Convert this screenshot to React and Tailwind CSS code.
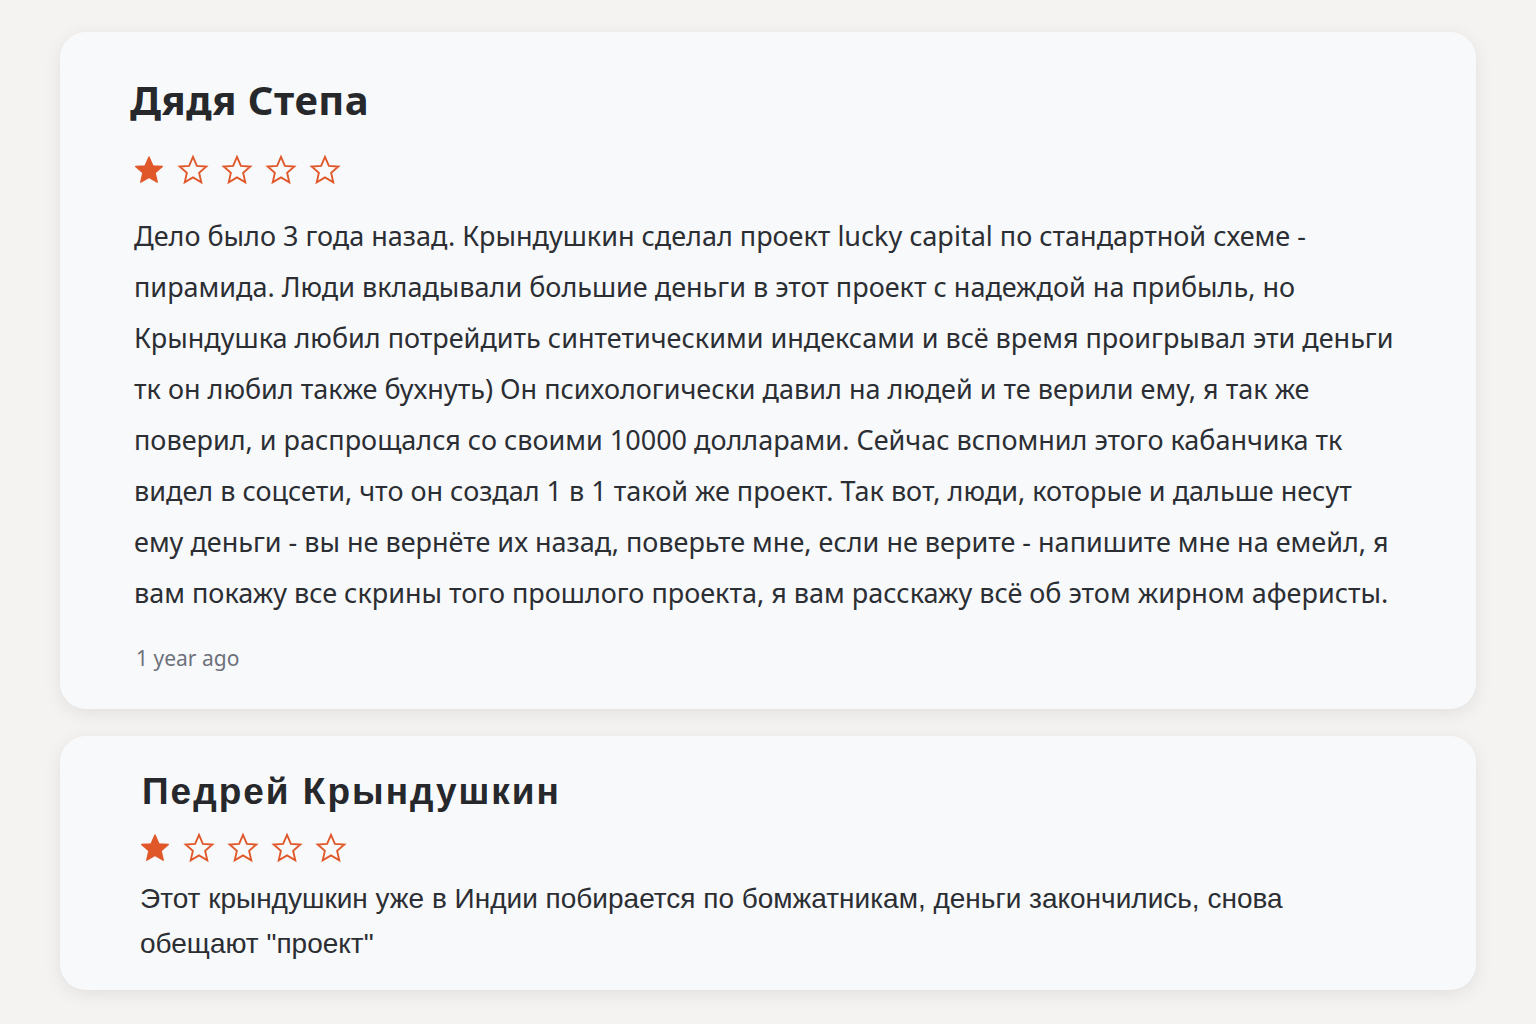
import React from "react";

function Star({ filled, size = 32 }) {
  const pts = "12,2.2 14.9,8.9 22,9.4 16.6,14.1 18.2,21.2 12,17.5 5.8,21.2 7.4,14.1 2,9.4 9.1,8.9";
  return (
    <svg width={size} height={size} viewBox="0 0 24 24" className="shrink-0">
      {filled ? (
        <polygon points={pts} fill="#e0582a" stroke="#e0582a" strokeWidth="1" strokeLinejoin="round" />
      ) : (
        <polygon points={pts} fill="none" stroke="#e0582a" strokeWidth="1.4" strokeLinejoin="miter" />
      )}
    </svg>
  );
}

function Stars({ value }) {
  return (
    <div className="flex items-center gap-[12px]">
      {[1, 2, 3, 4, 5].map((i) => (
        <Star key={i} filled={i <= value} />
      ))}
    </div>
  );
}

export default function App() {
  return (
    <div className="min-h-[1024px] w-full bg-[#f4f3f2] px-[60px] pt-[32px] pb-[36px] flex flex-col gap-[27px]">
      <article className="rounded-[26px] bg-[#f8f9fb] shadow-[0_4px_18px_rgba(0,0,0,0.08)] pl-[70px] pr-[50px] pt-[44px] pb-[36px]">
        <h2 className="font-['Noto_Sans',sans-serif] font-bold text-[40px] leading-[48px] tracking-[0.5px] text-[#26282c]">
          Дядя Степа
        </h2>
        <div className="mt-[30px] ml-[3px]">
          <Stars value={1} />
        </div>
        <p className="mt-[24px] ml-[4px] font-['Noto_Sans',sans-serif] text-[27px] leading-[51px] text-[#2b2e33]">
          Дело было 3 года назад. Крындушкин сделал проект lucky capital по стандартной схеме -<br />
          пирамида. Люди вкладывали большие деньги в этот проект с надеждой на прибыль, но<br />
          Крындушка любил потрейдить синтетическими индексами и всё время проигрывал эти деньги<br />
          тк он любил также бухнуть) Он психологически давил на людей и те верили ему, я так же<br />
          поверил, и распрощался со своими 10000 долларами. Сейчас вспомнил этого кабанчика тк<br />
          видел в соцсети, что он создал 1 в 1 такой же проект. Так вот, люди, которые и дальше несут<br />
          ему деньги - вы не вернёте их назад, поверьте мне, если не верите - напишите мне на емейл, я<br />
          вам покажу все скрины того прошлого проекта, я вам расскажу всё об этом жирном аферисты.
        </p>
        <div className="mt-[25px] ml-[6px] font-['Noto_Sans',sans-serif] text-[21px] leading-[30px] text-[#6d717a]">
          1 year ago
        </div>
      </article>

      <article className="rounded-[26px] bg-[#f8f9fb] shadow-[0_4px_18px_rgba(0,0,0,0.08)] pl-[82px] pr-[50px] pt-[34px] pb-[24px]">
        <h2 className="font-['Liberation_Sans',Arial,sans-serif] font-bold text-[37px] leading-[44px] tracking-[2px] text-[#26282c]">
          Педрей Крындушкин
        </h2>
        <div className="mt-[18px] -ml-[3px]">
          <Stars value={1} />
        </div>
        <p className="mt-[12px] -ml-[2px] font-['Liberation_Sans',Arial,sans-serif] text-[28px] leading-[45px] text-[#2b2e33]">
          Этот крындушкин уже в Индии побирается по бомжатникам, деньги закончились, снова<br />
          обещают "проект"
        </p>
      </article>
    </div>
  );
}
